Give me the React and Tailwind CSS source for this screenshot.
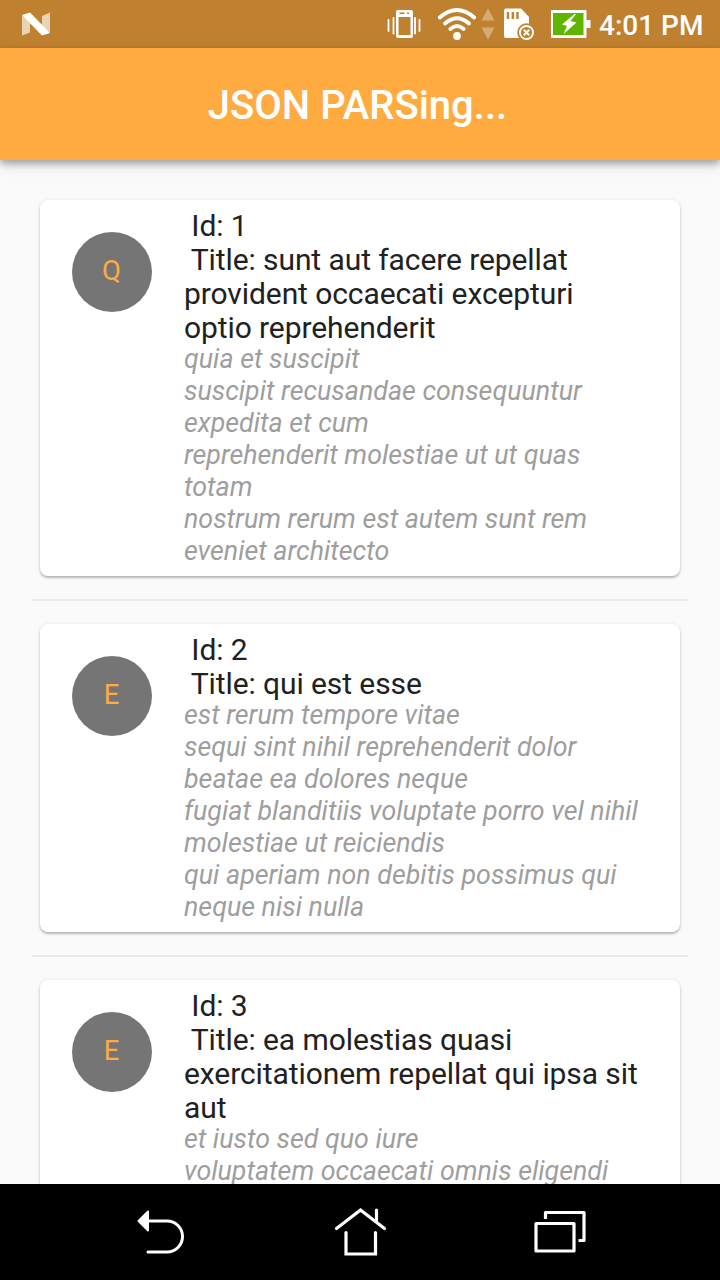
const posts = [
  {
    id: 1,
    initial: 'Q',
    title: ' Title: sunt aut facere repellat\nprovident occaecati excepturi\noptio reprehenderit',
    body: 'quia et suscipit\nsuscipit recusandae consequuntur\nexpedita et cum\nreprehenderit molestiae ut ut quas\ntotam\nnostrum rerum est autem sunt rem\neveniet architecto',
  },
  {
    id: 2,
    initial: 'E',
    title: ' Title: qui est esse',
    body: 'est rerum tempore vitae\nsequi sint nihil reprehenderit dolor\nbeatae ea dolores neque\nfugiat blanditiis voluptate porro vel nihil\nmolestiae ut reiciendis\nqui aperiam non debitis possimus qui\nneque nisi nulla',
  },
  {
    id: 3,
    initial: 'E',
    title: ' Title: ea molestias quasi\nexercitationem repellat qui ipsa sit\naut',
    body: 'et iusto sed quo iure\nvoluptatem occaecati omnis eligendi',
  },
];

function StatusBar() {
  return (
    <div className="flex h-12 shrink-0 items-center bg-[#bf802f] text-white">
      <svg className="ml-[20px] h-12 w-8" viewBox="20 0 32 48" fill="currentColor">
        <path d="M22 15v20.5l8-3V21zM50 12.5v20.5l-8-6V16z" opacity=".65" />
        <path d="M22 15l8-2.5L50 33l-8 2.5z" />
      </svg>
      <svg className="ml-[328px] h-12 w-[214px]" viewBox="380 0 214 48" fill="none" stroke="currentColor">
        <path d="M388.5 20v11M393.5 18v15.500M415 18v15.500M419.500 20v11" strokeWidth="1.8" strokeLinecap="round" />
        <path d="M398 10h13a2 2 0 0 1 2 2v24a2 2 0 0 1-2 2h-13a2 2 0 0 1-2-2V12a2 2 0 0 1 2-2zM398.500 17v18h12V17zM399.500 12.500v1.500h5v-1.500zM407 12.500v1.500h2v-1.500z" fill="currentColor" fillRule="evenodd" stroke="none" />
        <g strokeWidth="3.8" strokeLinecap="round">
          <path d="M439.800 17.500Q457 2.500 474.200 17.500" />
          <path d="M445 23.500Q457 13 469 23.500" />
          <path d="M450.300 29Q457 23 463.700 29" />
        </g>
        <circle cx="457" cy="36" r="3.900" fill="currentColor" stroke="none" />
        <path d="M488 8.500l6.500 12h-13zM481.500 27.500h13l-6.500 12z" fill="#d6ab75" stroke="none" />
        <path d="M506 8.500h15L529 17v21h-23a2 2 0 0 1-2-2V10.500a2 2 0 0 1 2-2z" fill="currentColor" stroke="none" />
        <path d="M508 12v7M512.800 12v7M517.500 12v7" stroke="#bf802f" strokeWidth="2.400" />
        <circle cx="526.500" cy="32.500" r="9.300" fill="#bf802f" stroke="none" />
        <circle cx="526.500" cy="32.500" r="7.500" fill="currentColor" stroke="none" />
        <circle cx="526.500" cy="32.500" r="5.600" fill="#bf802f" stroke="none" />
        <path d="M523.800 29.800l5.400 5.400m0-5.400l-5.400 5.400" strokeWidth="2" />
        <path d="M552 10h33.500a1 1 0 0 1 1 1v9h4v8h-4v9a1 1 0 0 1-1 1H552a1 1 0 0 1-1-1V11a1 1 0 0 1 1-1z" fill="currentColor" stroke="none" />
        <path d="M553 13h30.500v22H553z" fill="#5eb600" stroke="none" />
        <path d="M574.500 14l-12.500 10.500 5 1.500-3.500 8 13-11.500-6-1.500 5.500-7z" fill="currentColor" stroke="none" />
      </svg>
      <span className="ml-[5px] mt-[4px] whitespace-nowrap text-[28px] font-medium leading-none">4:01 PM</span>
    </div>
  );
}

function PostCard({ post }) {
  return (
    <article className="mx-2 flex rounded-lg bg-white py-2 pl-8 shadow-[0_2px_2px_rgba(0,0,0,0.2),0_1px_4px_rgba(0,0,0,0.12)]">
      <div className="mt-6 flex size-20 shrink-0 items-center justify-center rounded-full bg-[#757575] pb-[2px] pr-[1px] text-[27.500px] text-[#ffab40]">
        {post.initial}
      </div>
      <div className="ml-8 whitespace-pre">
        <h2 className="-mb-[2px] pt-px text-[30px] leading-[34px] tracking-[-0.09px] text-[#212121]">{` Id: ${post.id}\n${post.title}`}</h2>
        <p className="pb-px text-[26.800px] italic leading-8 text-[#9e9e9e]">{post.body}</p>
      </div>
    </article>
  );
}

function NavigationBar() {
  return (
    <nav className="flex h-24 shrink-0 items-center bg-black text-white">
      <svg className="ml-[120px] h-24 w-[90px]" viewBox="120 1184 90 96" fill="none" stroke="currentColor" strokeWidth="3" strokeLinecap="round">
        <path d="M147 1221h20a15.500 15.500 0 0 1 0 31h-19" />
        <path d="M138.500 1221l9.500-9.500v19z" fill="currentColor" strokeWidth="2" strokeLinejoin="round" />
      </svg>
      <svg className="ml-[110px] h-24 w-[90px]" viewBox="320 1184 90 96" fill="none" stroke="currentColor" strokeWidth="3.200" strokeLinecap="round">
        <path d="M336.500 1228.500l24-18.500 24 18.500M376.500 1210v12M346 1232.500v21.500h29.500v-21.500" />
      </svg>
      <svg className="ml-[110px] h-24 w-[90px]" viewBox="520 1184 90 96" fill="none" stroke="currentColor" strokeWidth="3.200">
        <path d="M536 1223.500h38v27.500h-38zM545.500 1219v-6.500h38.500v28h-5.500" strokeLinejoin="round" />
      </svg>
    </nav>
  );
}

export default function App() {
  return (
    <div className="flex h-[1280px] w-[720px] flex-col overflow-hidden bg-[#fafafa] font-['Roboto',sans-serif]">
      <StatusBar />
      <header className="z-10 flex h-28 shrink-0 items-center justify-center bg-[#ffab40] pr-[5px] pt-[4px] shadow-[0_4px_6px_rgba(0,0,0,0.18),0_6px_12px_rgba(0,0,0,0.13),0_2px_8px_rgba(0,0,0,0.1)]">
        <h1 className="text-[40px] font-medium leading-none text-white">JSON PARSing...</h1>
      </header>
      <main className="min-h-0 flex-1 overflow-hidden px-8 pt-10">
        {posts.map((post, index) => (
          <div key={post.id}>
            {index > 0 && <hr className="mb-[23px] mt-[23px] border-t-2 border-[#e9e9e9]" />}
            <PostCard post={post} />
          </div>
        ))}
      </main>
      <NavigationBar />
    </div>
  );
}
